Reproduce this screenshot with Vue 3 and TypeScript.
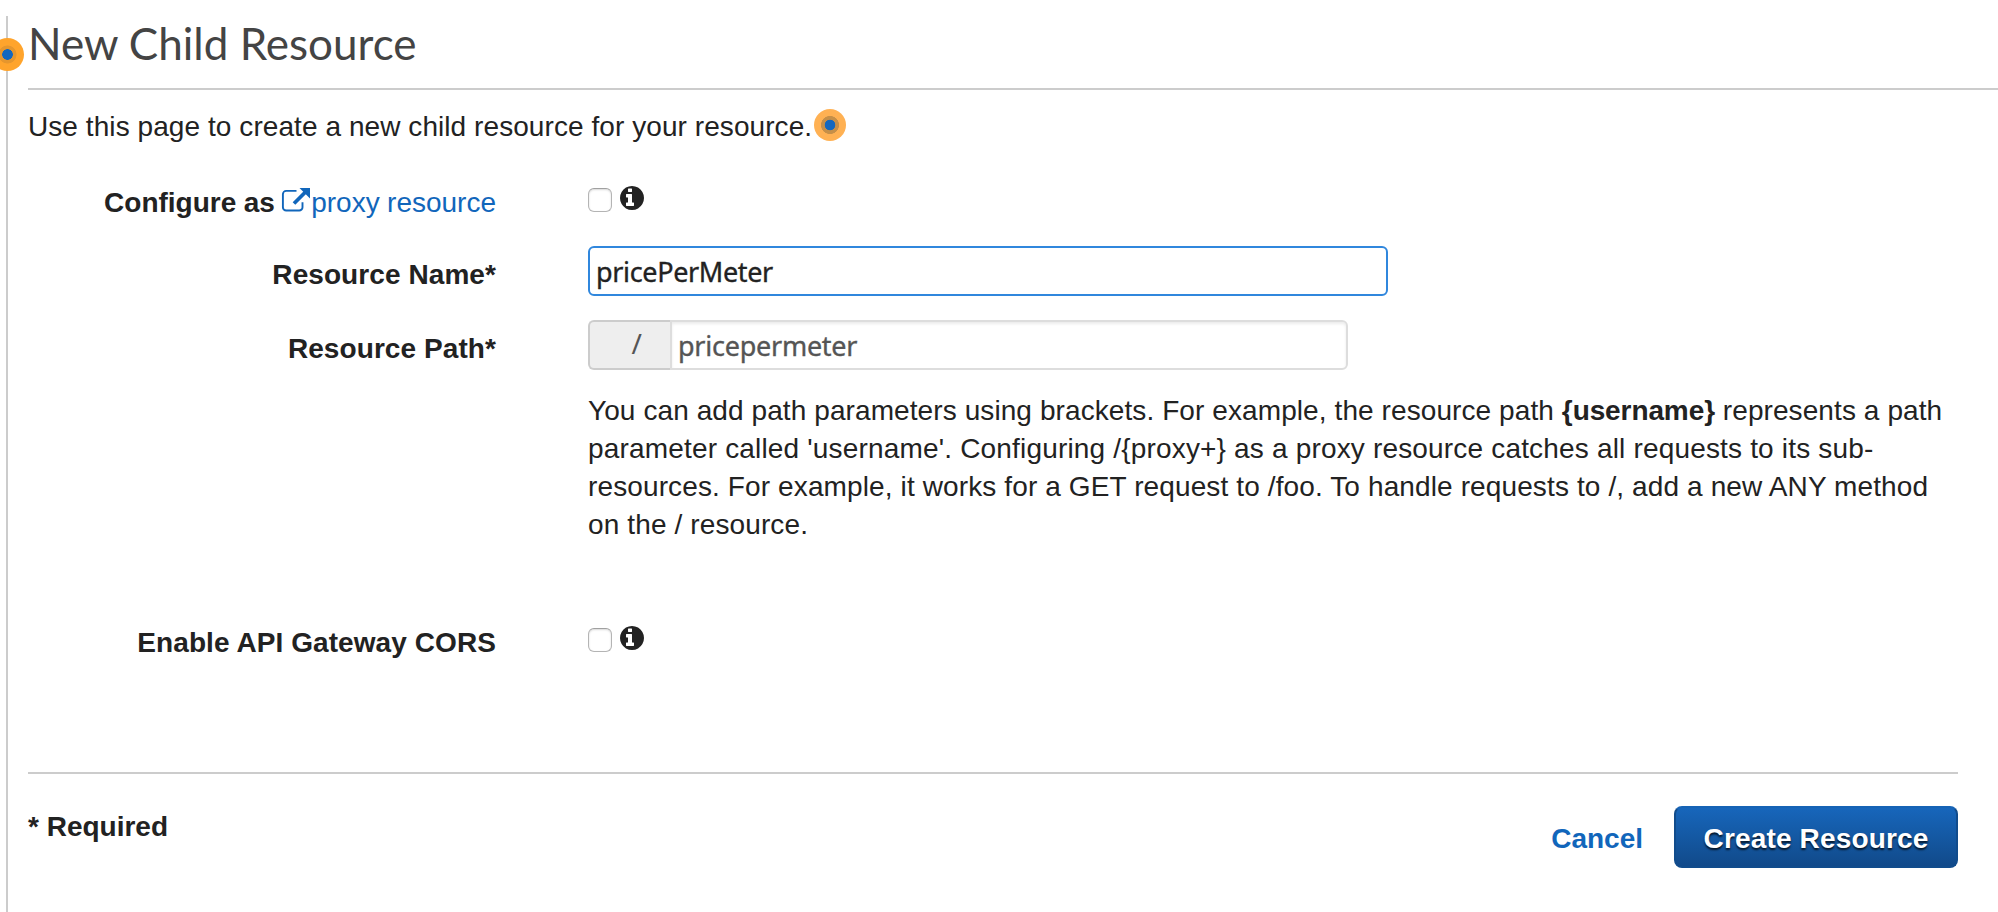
<script setup lang="ts">
import { ref } from 'vue'

const proxyResource = ref(false)
const enableCors = ref(false)
const resourceName = ref('pricePerMeter')
const resourcePath = ref('pricepermeter')

const infoIcon =
  'M1024 1376v-160q0-14-9-23t-23-9h-96v-512q0-14-9-23t-23-9h-320q-14 0-23 9t-9 23v160q0 14 9 23t23 9h96v320h-96q-14 0-23 9t-9 23v160q0 14 9 23t23 9h448q14 0 23-9t9-23zm-128-896v-160q0-14-9-23t-23-9h-192q-14 0-23 9t-9 23v160q0 14 9 23t23 9h192q14 0 23-9t9-23zm768 416q0 209-103 385.5t-279.5 279.5-385.5 103-385.5-103-279.5-279.5-103-385.5 103-385.5 279.5-279.5 385.5-103 385.5 103 279.5 279.5 103 385.5z'
</script>

<template>
  <main class="panel">
    <span class="beacon edge"></span>
    <h1 class="title">New Child Resource</h1>

    <div class="content">
      <p class="intro">
        <span>Use this page to create a new child resource for your resource.</span>
        <span class="beacon soft"></span>
      </p>

      <form class="form" @submit.prevent>
        <div class="row">
          <div class="label configure">
            Configure as
            <a class="link"><svg class="external" viewBox="0 0 30 26" aria-hidden="true">
              <path d="M15.5 3.9H5.2a3.3 3.3 0 0 0-3.3 3.3v13a3.3 3.3 0 0 0 3.3 3.3h13a3.3 3.3 0 0 0 3.3-3.3v-5" fill="none" stroke="currentColor" stroke-width="1.9" />
              <path d="M13 16.5 26 3.5" fill="none" stroke="currentColor" stroke-width="3.8" />
              <path d="M18.5 1h10.5v10.5z" fill="currentColor" />
            </svg>proxy resource</a>
          </div>
          <div class="checks">
            <input v-model="proxyResource" class="checkbox" type="checkbox" />
            <svg class="info" viewBox="128 128 1536 1536"><path :d="infoIcon" fill="currentColor" /></svg>
          </div>
        </div>

        <div class="row tall">
          <label class="label" for="name">Resource Name*</label>
          <input id="name" v-model="resourceName" class="input active" type="text" spellcheck="false" />
        </div>

        <div class="row tall">
          <label class="label" for="path">Resource Path*</label>
          <div>
            <div class="group">
              <span class="addon">/</span>
              <input id="path" v-model="resourcePath" class="input attached" type="text" spellcheck="false" />
            </div>
            <p class="help">
              <span class="l1">You can add path parameters using brackets. For example, the resource path <b>{username}</b> represents a path</span>
              <span class="l2">parameter called 'username'. Configuring /{proxy+} as a proxy resource catches all requests to its sub-</span>
              <span class="l3">resources. For example, it works for a GET request to /foo. To handle requests to /, add a new ANY method</span>
              <span class="l4">on the / resource.</span>
            </p>
          </div>
        </div>

        <div class="row cors">
          <div class="label">Enable API Gateway CORS</div>
          <div class="checks">
            <input v-model="enableCors" class="checkbox" type="checkbox" />
            <svg class="info" viewBox="128 128 1536 1536"><path :d="infoIcon" fill="currentColor" /></svg>
          </div>
        </div>
      </form>

      <footer class="footer">
        <span class="required">* Required</span>
        <div class="actions">
          <a class="cancel">Cancel</a>
          <button class="create" type="button">Create Resource</button>
        </div>
      </footer>
    </div>
  </main>
</template>

<style>
body {
  margin: 0;
  padding-top: 16px;
  background: #fff;
  overflow: hidden;
}
</style>

<style scoped>
.panel {
  position: relative;
  box-sizing: border-box;
  height: 896px;
  margin-left: 6px;
  padding-left: 20px;
  border-left: 2px solid #ccc;
  font: 28px/38px 'Liberation Sans', Arial, sans-serif;
  color: #222;
}
.title {
  margin: 0;
  padding: 1px 0 19px;
  border-bottom: 2px solid #ccc;
  font: 400 44px/52px Lato, sans-serif;
  color: #444;
}
.content {
  width: 1930px;
}
.intro {
  display: flex;
  gap: 2px;
  margin: 0;
  padding-top: 18px;
  letter-spacing: 0.07px;
}
.beacon {
  box-sizing: border-box;
  width: 32px;
  height: 32px;
  border-radius: 50%;
}
.edge {
  position: absolute;
  left: -17px;
  top: 22px;
  width: 33px;
  height: 33px;
  background: radial-gradient(circle, #1467be 5px, #e6962d 5.6px, #e6962d 8.7px, #ffa42c 9.3px);
}
.soft {
  margin-top: 1px;
  background: radial-gradient(circle, #1467be 5px, #c68f48 5.6px, #c68f48 8.7px, #ffb153 9.3px);
}
.form {
  padding-top: 38px;
}
.row {
  display: grid;
  grid-template-columns: 468px 1fr;
  column-gap: 92px;
  align-items: start;
}
.row.tall {
  margin-top: 24px;
}
.row.tall .label {
  padding-top: 10px;
}
.row.cors {
  margin-top: 80px;
}
.label {
  font-weight: 700;
  letter-spacing: 0.08px;
  text-align: right;
  white-space: nowrap;
}
.label.configure {
  letter-spacing: 0;
  word-spacing: -0.4px;
}
.link {
  font-weight: 400;
  color: #1166bb;
}
.external {
  width: 30px;
  height: 26px;
  margin-left: -1px;
  vertical-align: -1px;
}
.checks {
  display: flex;
  gap: 8px;
  height: 38px;
}
.checkbox {
  appearance: none;
  box-sizing: border-box;
  width: 24px;
  height: 24px;
  margin: 4px 0 0;
  border: 1.5px solid #b4b4b4;
  border-top-color: #a0a0a0;
  border-radius: 6px;
  background: #fff;
  box-shadow: inset 0 1px 2px #d8d8d8;
}
.info {
  width: 24px;
  height: 24px;
  margin-top: 2px;
}
.input {
  box-sizing: border-box;
  width: 800px;
  height: 50px;
  margin: 0;
  padding: 0 6px;
  border: 2px solid #ddd;
  border-radius: 6px;
  outline: none;
  background: #fff;
  font: 27px 'Noto Sans', sans-serif;
  letter-spacing: -0.35px;
  color: #222;
  -webkit-text-stroke: 0.35px currentColor;
}
.input.active {
  border-color: #3087dd;
}
.group {
  display: flex;
}
.addon {
  box-sizing: border-box;
  width: 82px;
  height: 50px;
  padding-left: 41.5px;
  border: 2px solid #ccc;
  border-right: 0;
  border-radius: 6px 0 0 6px;
  background: #eee;
  font: 28px/43px 'Noto Sans', sans-serif;
  color: #555;
}
.input.attached {
  width: 678px;
  border-radius: 0 6px 6px 0;
  box-shadow: inset 0 2px 3px #ececec;
  letter-spacing: -0.25px;
  color: #555;
}
.help {
  display: flex;
  flex-direction: column;
  margin: 22px 0 0;
  white-space: nowrap;
}
.l1 {
  letter-spacing: 0.09px;
}
.l1 b {
  letter-spacing: -0.1px;
}
.l2 {
  letter-spacing: 0.175px;
}
.l3 {
  letter-spacing: 0.12px;
}
.l4 {
  letter-spacing: 0.12px;
}
.footer {
  display: flex;
  justify-content: space-between;
  align-items: flex-start;
  margin-top: 110px;
  padding-top: 32px;
  border-top: 2px solid #ccc;
  font-weight: 700;
}
.required {
  padding-top: 2px;
}
.actions {
  display: flex;
  align-items: center;
  gap: 31px;
}
.cancel {
  padding-top: 4px;
  color: #1166bb;
}
.create {
  box-sizing: border-box;
  width: 284px;
  height: 62px;
  padding: 4px 0 0;
  border: 2px solid #114c8c;
  border-top-color: #1663b5;
  border-radius: 8px;
  background: linear-gradient(#1766bb, #114a8a);
  font: 700 28px/38px 'Liberation Sans', Arial, sans-serif;
  letter-spacing: 0.15px;
  color: #fff;
  text-shadow: 0 2px 2px rgba(0, 0, 0, 0.75);
}
</style>
